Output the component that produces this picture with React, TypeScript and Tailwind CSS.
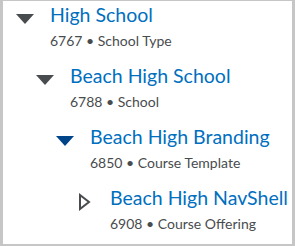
import React from "react";

type Node = {
  title: string;
  id: string;
  kind: string;
  level: number;
  caret: "down" | "down-active" | "right";
};

const nodes: Node[] = [
  { title: "High School", id: "6767", kind: "School Type", level: 0, caret: "down" },
  { title: "Beach High School", id: "6788", kind: "School", level: 1, caret: "down" },
  { title: "Beach High Branding", id: "6850", kind: "Course Template", level: 2, caret: "down-active" },
  { title: "Beach High NavShell", id: "6908", kind: "Course Offering", level: 3, caret: "right" },
];

const indent = ["pl-[13px]", "pl-[33px]", "pl-[53px]", "pl-[73px]"];

function Caret({ type }: { type: Node["caret"] }) {
  if (type === "right") {
    return (
      <svg width="14" height="18" viewBox="0 0 14 18" className="mt-[7px] ml-[2px]">
        <path d="M2 2 L11 9 L2 16 Z" fill="none" stroke="#494c4e" strokeWidth="2" />
      </svg>
    );
  }
  const color = type === "down-active" ? "#004489" : "#494c4e";
  return (
    <svg width="18" height="10" viewBox="0 0 18 10" className="mt-[11px]">
      <path d="M0 0 H18 L9 10 Z" fill={color} />
    </svg>
  );
}

export default function App() {
  return (
    <div
      className="w-[295px] h-[246px] bg-white border-[#c6c6c6] border-l-[3px] border-r-[3px] border-t border-b-2 overflow-hidden"
      style={{ fontFamily: "Lato, 'Noto Sans', sans-serif" }}
    >
      {nodes.map((n) => (
        <div key={n.id} className={`flex pt-[2px] pb-[11px] ${indent[n.level]}`}>
          <div className="w-[34px] shrink-0 flex items-start">
            <Caret type={n.caret} />
          </div>
          <div className="flex flex-col gap-[4px] whitespace-nowrap">
            <div className="text-[19.5px] leading-[24px] text-[#006fbf]">{n.title}</div>
            <div className="text-[14px] leading-[20px] text-[#494c4e]">
              {n.id} • {n.kind}
            </div>
          </div>
        </div>
      ))}
    </div>
  );
}
